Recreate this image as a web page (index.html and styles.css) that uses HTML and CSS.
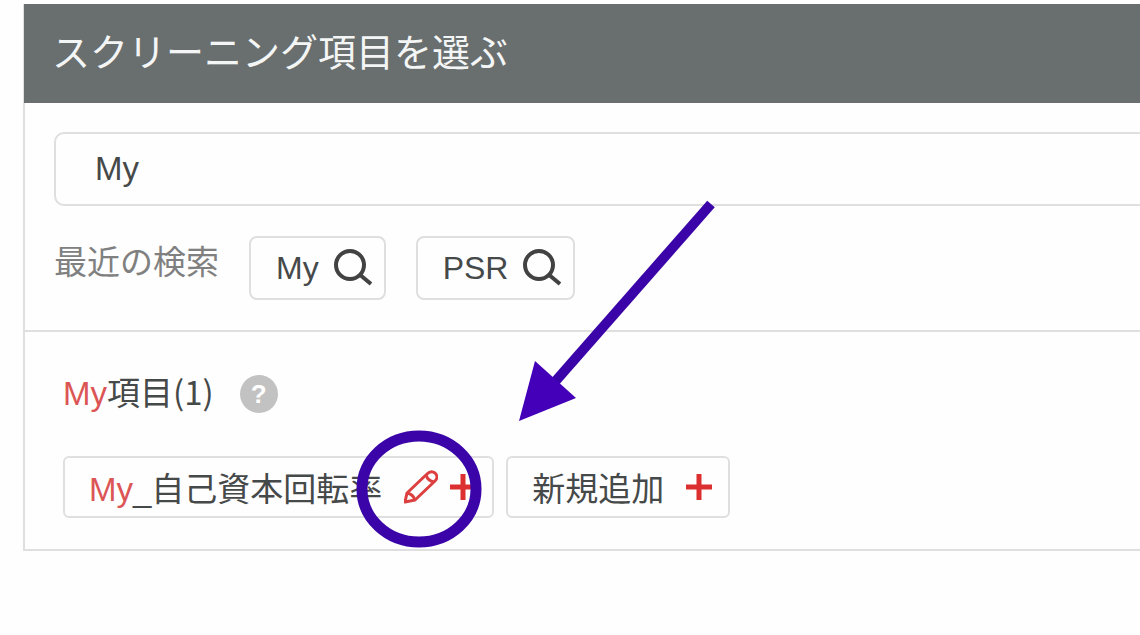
FILE: index.html
```html
<!DOCTYPE html>
<html lang="ja">
<head>
    <meta charset="UTF-8">
    <title>スクリーニング項目を選ぶ</title>
    <link rel="stylesheet" href="styles.css">
</head>
<body>
<main class="panel">
    <h1 class="panel-title">スクリーニング項目を選ぶ</h1>

    <!-- Search box and recent searches -->
    <section class="search">
        <input class="search-input" type="text" value="My" aria-label="項目を検索">
        <div class="recent">
            <span class="recent-label">最近の検索</span>
            <button class="chip" type="button">
                My
                <svg class="icon-search" viewBox="0 0 38 38" aria-hidden="true">
                    <circle cx="16" cy="16" r="14"/>
                    <path d="M25 25L37 35"/>
                </svg>
            </button>
            <button class="chip" type="button">
                PSR
                <svg class="icon-search" viewBox="0 0 38 38" aria-hidden="true">
                    <circle cx="16" cy="16" r="14"/>
                    <path d="M25 25L37 35"/>
                </svg>
            </button>
        </div>
    </section>

    <!-- Matching items -->
    <section class="results">
        <div class="results-head">
            <h2><span class="hit">My</span><span class="jp">項目(1)</span></h2>
            <button class="help" type="button">?</button>
        </div>
        <div class="items">
            <div class="item">
                <span class="item-name"><span class="hit">My</span>_自己資本回転率</span>
                <button class="icon-btn" type="button" aria-label="編集">
                    <svg class="icon-edit" viewBox="0 0 34 34" aria-hidden="true">
                        <path d="M1 32L3 23L23 4Q27 0 31 3Q35 7 31 11L11 30Z"/>
                        <path d="M22 5Q24 11 30 12M3 23Q9 24 11 30"/>
                    </svg>
                </button>
                <button class="icon-btn" type="button" aria-label="追加">
                    <svg class="icon-plus" viewBox="0 0 26 26" aria-hidden="true"><path d="M13 0V26M0 13H26"/></svg>
                </button>
            </div>
            <button class="item" type="button">
                <span class="item-name">新規追加</span>
                <svg class="icon-plus" viewBox="0 0 26 26" aria-hidden="true"><path d="M13 0V26M0 13H26"/></svg>
            </button>
        </div>
    </section>
</main>

<!-- Arrow and ring pointing at the edit button -->
<svg class="annotation" viewBox="0 0 380 360" aria-hidden="true">
    <path class="shaft" d="M361 14L203 194"/>
    <path class="head" d="M169 231L185 171L226 208Z"/>
    <ellipse class="ring" cx="69" cy="299" rx="57" ry="53"/>
</svg>
</body>
</html>
```
FILE: styles.css
```css
body {
    margin: 0;
    padding: 4px 0 0 23px;
    overflow-x: hidden;
    background-color: #fefefe;
    color: #464949;
    font-family: "Liberation Sans", "Noto Sans CJK JP", sans-serif;
    font-size: 33px;
    position: relative;
}

button,
input {
    font-family: inherit;
    color: inherit;
}

button {
    cursor: pointer;
}

svg {
    fill: none;
}

/* The panel continues past the right edge of the window */
.panel {
    margin-right: -40px;
    border: 2px solid #dfdfdf;
    border-top: none;
}

.panel-title {
    margin: 0 0 0 -1px;
    padding: 0 28px;
    background-color: #696e6f;
    color: #f4f6f6;
    font-size: 38px;
    font-weight: 400;
    line-height: 99px;
}

.search {
    padding: 29px 30px 30px 29px;
    border-bottom: 2px solid #dfdfdf;
}

.search-input {
    display: block;
    box-sizing: border-box;
    width: 100%;
    height: 74px;
    padding: 0 39px;
    border: 2px solid #dfdfdf;
    border-radius: 10px;
    background-color: #fefefe;
    font-size: 33px;
}

.recent {
    display: flex;
    align-items: flex-start;
    margin-top: 30px;
}

.recent-label {
    margin-right: 30px;
    color: #808080;
    line-height: 54px;
}

.chip {
    display: flex;
    align-items: center;
    gap: 15px;
    box-sizing: border-box;
    height: 64px;
    margin-right: 30px;
    padding: 0 12px 0 25px;
    border: 2px solid #dfdfdf;
    border-radius: 8px;
    background-color: #fefefe;
    font-size: 32px;
}

.icon-search {
    width: 38px;
    height: 38px;
    stroke: #424242;
    stroke-width: 4;
}

.results {
    padding: 30px 30px 31px 38px;
}

.results-head {
    display: flex;
    align-items: center;
    gap: 26px;
    height: 64px;
    margin-bottom: 30px;
}

.results-head h2 {
    margin: 0;
    padding-bottom: 4px;
    font-size: 33px;
    font-weight: 400;
    line-height: 60px;
}

.jp {
    font-family: "Noto Sans CJK JP", sans-serif;
}

.hit {
    color: #dc5555;
}

.help {
    width: 38px;
    height: 38px;
    padding: 0;
    border: none;
    border-radius: 50%;
    background-color: #c2c2c2;
    color: #ffffff;
    font-size: 26px;
    font-weight: bold;
    line-height: 38px;
}

.items {
    display: flex;
    gap: 12px;
}

.item {
    display: flex;
    align-items: center;
    box-sizing: border-box;
    height: 62px;
    padding: 0 16px 0 24px;
    border: 2px solid #dfdfdf;
    border-radius: 6px;
    background-color: #fefefe;
    font-size: 33px;
}

.item-name {
    margin-right: 22px;
    white-space: nowrap;
}

.icon-btn {
    display: flex;
    padding: 0;
    border: none;
    background: none;
}

.icon-edit {
    width: 34px;
    height: 34px;
    margin-right: 12px;
    stroke: #dc4040;
    stroke-width: 3;
    stroke-linejoin: round;
}

.icon-plus {
    width: 26px;
    height: 26px;
    stroke: #dc2f2f;
    stroke-width: 5;
}

.annotation {
    position: absolute;
    left: 350px;
    top: 190px;
    width: 380px;
    height: 360px;
    pointer-events: none;
}

.annotation .shaft {
    stroke: #3a04a8;
    stroke-width: 10;
}

.annotation .head {
    fill: #4400b8;
}

.annotation .ring {
    stroke: #3a04a8;
    stroke-width: 11;
}
```
